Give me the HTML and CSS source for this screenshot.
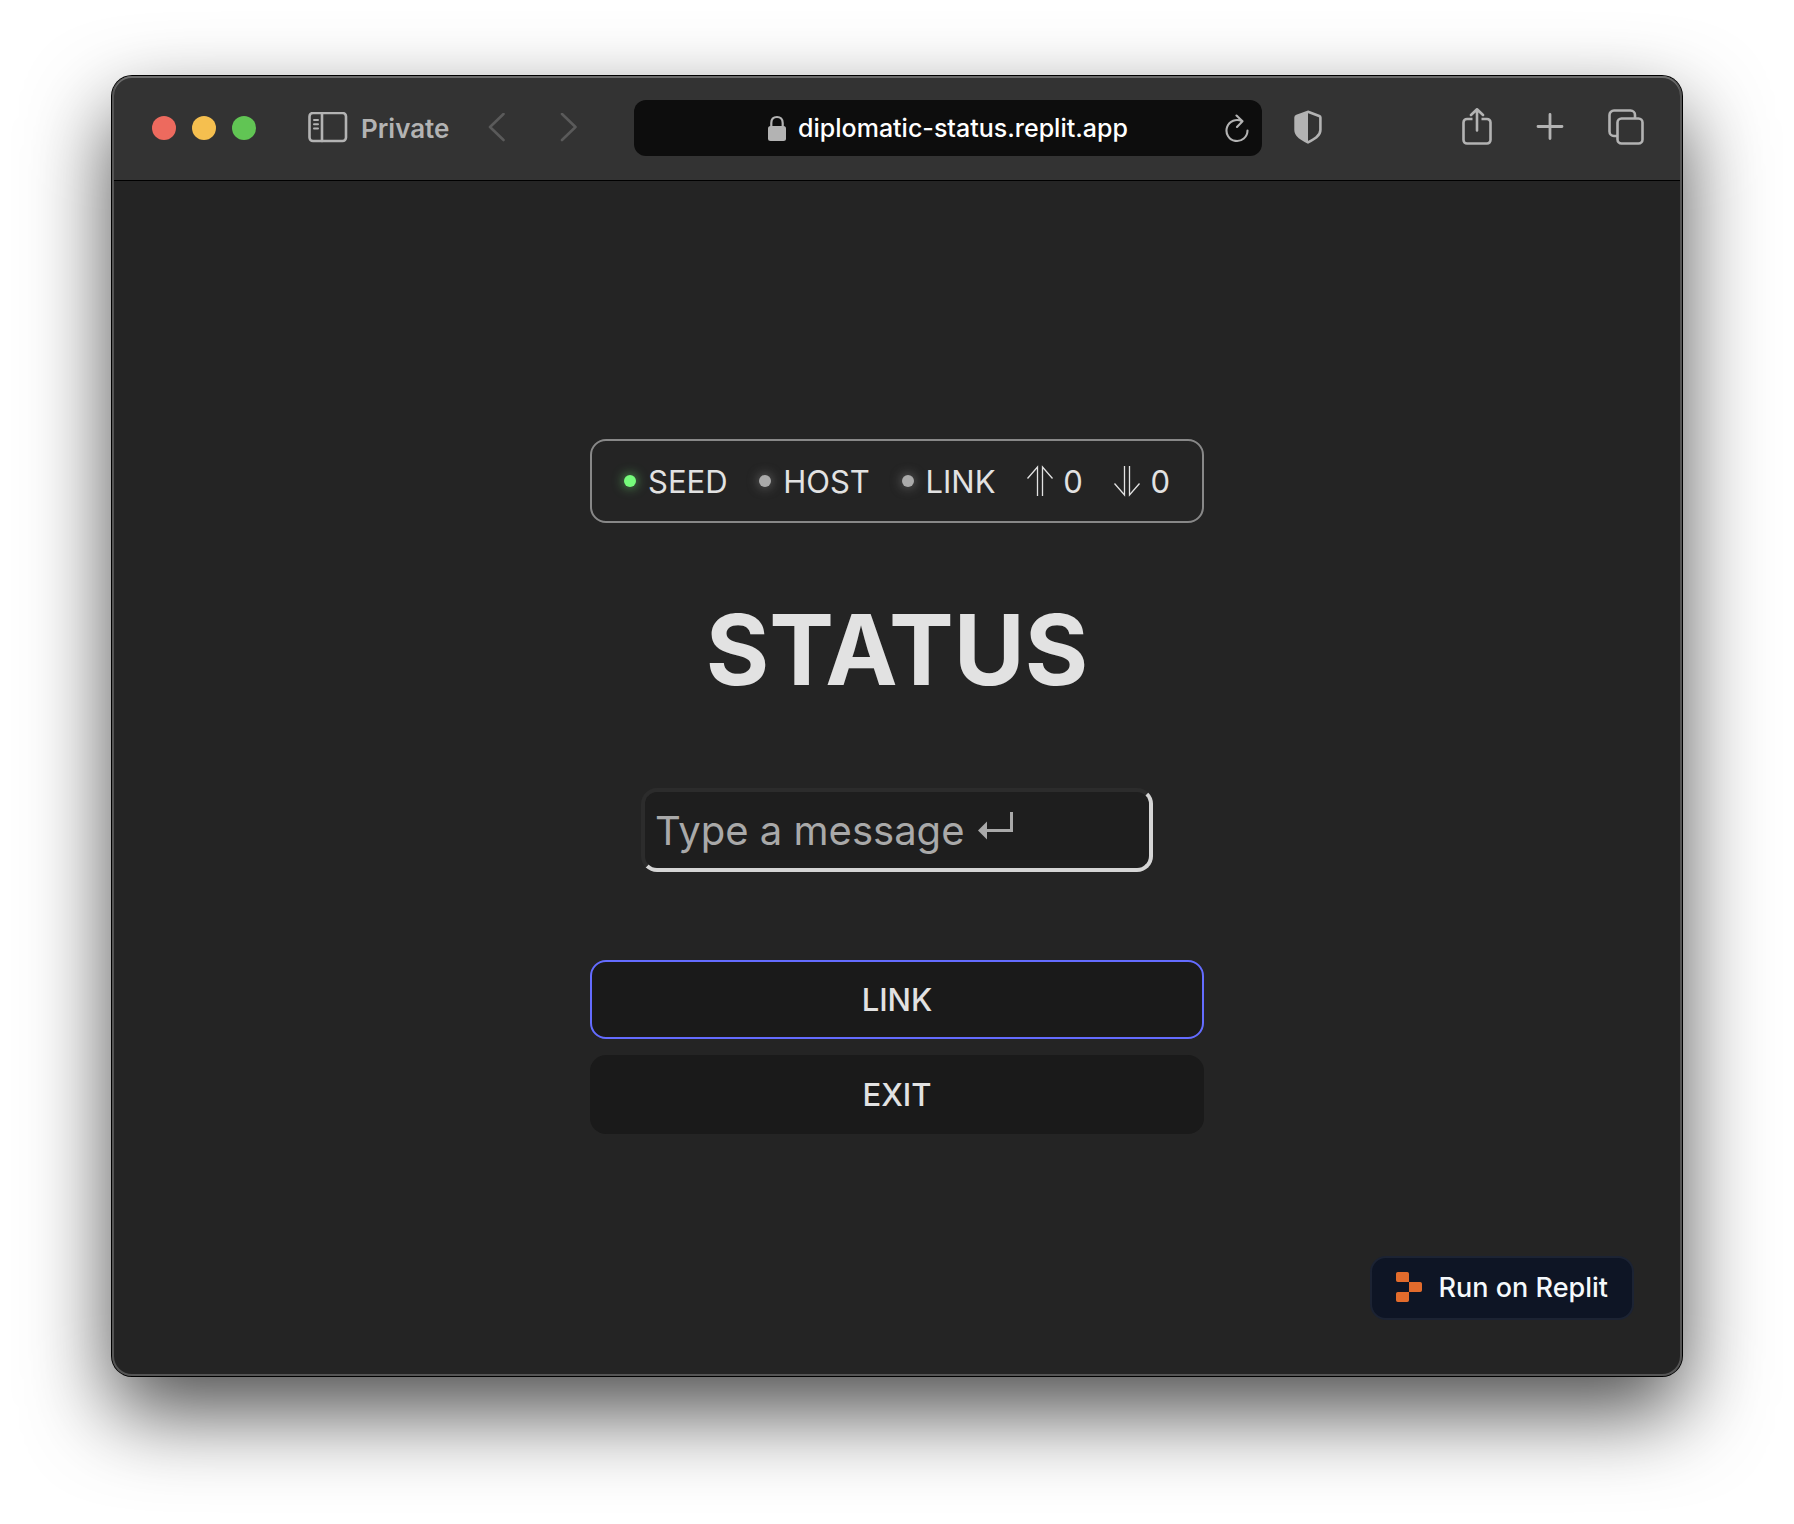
FILE: index.html
```html
<!DOCTYPE html>
<html lang="en">
<head>
<meta charset="utf-8">
<meta name="viewport" content="width=device-width, initial-scale=1">
<title>Status</title>
<link rel="stylesheet" href="styles.css">
</head>
<body>
<div class="window">
  <header class="toolbar">
    <div class="side side-left">
      <div class="lights">
        <button class="light red" aria-label="Close"></button>
        <button class="light yellow" aria-label="Minimize"></button>
        <button class="light green" aria-label="Zoom"></button>
      </div>
      <button class="private">
        <svg width="40" height="32" viewBox="0 0 40 32" fill="none" stroke="currentColor" stroke-width="2.6" stroke-linecap="round"><rect x="1.5" y="1" width="36.500" height="28" rx="3.500"/><path d="M14 1v28"/><path stroke-width="2" d="M6 8h4M6 12.300h4M6 16.600h4"/></svg>
        <span>Private</span>
      </button>
      <nav class="history">
        <button aria-label="Back"><svg width="18" height="30" viewBox="0 0 18 30" fill="none" stroke="currentColor" stroke-width="2.600" stroke-linecap="round" stroke-linejoin="round"><path d="M16.500 1 3 14l13.500 13"/></svg></button>
        <button aria-label="Forward"><svg width="18" height="30" viewBox="0 0 18 30" fill="none" stroke="currentColor" stroke-width="2.600" stroke-linecap="round" stroke-linejoin="round"><path d="M2 1l13.500 13L2 27"/></svg></button>
      </nav>
    </div>
    <div class="address">
      <svg class="lock" width="18" height="26" viewBox="0 0 18 26"><rect y="11" width="18" height="15" rx="2.500" fill="currentColor"/><path d="M3.300 12V8C3.300 4 5.500 2 9 2s5.700 2 5.700 6v4" fill="none" stroke="currentColor" stroke-width="2.200"/></svg>
      <span class="url">diplomatic-status.replit.app</span>
      <button class="reload" aria-label="Reload"><svg width="24" height="30" viewBox="0 0 24 30" fill="none" stroke="currentColor" stroke-width="2.100" stroke-linecap="round" stroke-linejoin="round"><path d="M22.500 17.500A10.500 10.500 0 1 1 17 8.300M11.500 2.500l6 5.700-5.500 5.800"/></svg></button>
    </div>
    <div class="side side-right">
      <button aria-label="Privacy report"><svg width="28" height="34" viewBox="0 0 28 34"><path d="M14 1.800 25.200 6c.8.300 1.200.8 1.200 1.600V20c0 6-6.400 9.300-12.400 12.300C8 29.300 1.600 26 1.600 20V7.600c0-.8.400-1.300 1.200-1.600z" fill="none" stroke="currentColor" stroke-width="2.600"/><path d="M14 1.500V32C8 29 1.500 26 1.500 20V6.500z" fill="currentColor"/></svg></button>
      <div class="actions">
        <button aria-label="Share"><svg width="30" height="38" viewBox="0 0 30 38" fill="none" stroke="currentColor" stroke-width="2.600" stroke-linecap="round" stroke-linejoin="round"><path stroke-linecap="butt" d="M10.500 11H5a3.500 3.500 0 0 0-3.500 3.500V32A3.500 3.500 0 0 0 5 35.500h20a3.500 3.500 0 0 0 3.500-3.500V14.500A3.500 3.500 0 0 0 25 11h-5.500"/><path d="M15 22.500V1.300M9 7l6-5.700L21 7"/></svg></button>
        <button aria-label="New tab"><svg width="28" height="28" viewBox="0 0 28 28" stroke="currentColor" stroke-width="2.800" stroke-linecap="round"><path d="M14 1.500v24M2 13.500h24"/></svg></button>
        <button aria-label="Tab overview"><svg width="36" height="36" viewBox="0 0 36 36" fill="none" stroke="currentColor" stroke-width="2.600"><rect x="9.500" y="9.500" width="25" height="25" rx="4"/><path d="M9.500 27H6a4.500 4.500 0 0 1-4.500-4.500V6A4.500 4.500 0 0 1 6 1.500h16.500A4.500 4.500 0 0 1 27 6v3.500"/></svg></button>
      </div>
    </div>
  </header>
  <main class="page">
    <div class="panel">
      <ul class="indicators">
        <li><span class="dot on"></span>SEED</li>
        <li><span class="dot"></span>HOST</li>
        <li><span class="dot"></span>LINK</li>
        <li class="count"><svg width="26" height="32" viewBox="0 0 26 32" fill="none" stroke="currentColor" stroke-width="1.300"><path d="M.5 13.500 10.500 2v29M25.500 13.500 15.500 2v29"/></svg>0</li>
        <li class="count"><svg width="26" height="32" viewBox="0 0 26 32" fill="none" stroke="currentColor" stroke-width="1.300"><path d="M.5 18.500 10.500 30V1M25.500 18.500 15.500 30V1"/></svg>0</li>
      </ul>
      <h1>STATUS</h1>
      <div class="message">
        <input type="text" placeholder="Type a message" aria-label="Type a message">
        <svg class="enter" width="36" height="28" viewBox="0 0 36 28"><path d="M0 18.500 9 9.500v18z" fill="currentColor"/><path d="M8 18.500h25.500V0" fill="none" stroke="currentColor" stroke-width="3"/></svg>
      </div>
      <div class="buttons">
        <button class="primary">LINK</button>
        <button>EXIT</button>
      </div>
    </div>
    <a class="badge" href="#">
      <svg width="26" height="30" viewBox="0 0 26 30" fill="currentColor"><path d="M1.800 0h9.400Q13 0 13 1.800V10H1.800Q0 10 0 8.200V1.800Q0 0 1.800 0zM13 10h11.200Q26 10 26 11.800v6.400q0 1.800-1.800 1.800H13zM1.800 20H13v8.200q0 1.800-1.800 1.800H1.800Q0 30 0 28.200v-6.400Q0 20 1.800 20z"/></svg>
      <span>Run on Replit</span>
    </a>
  </main>
</div>
</body>
</html>
```
FILE: styles.css
```css
* { box-sizing: border-box; }

body {
  margin: 0;
  padding: 76px 112px 148px;
  background: #fff;
  font-family: Inter, "Liberation Sans", sans-serif;
  color: #e2e2e2;
}

button {
  margin: 0;
  padding: 0;
  border: 0;
  background: none;
  color: inherit;
  font: inherit;
}

svg { display: block; flex: none; }

.window {
  display: flex;
  flex-direction: column;
  min-height: calc(100vh - 224px);
  border-radius: 20px;
  background: #242424;
  box-shadow:
    inset 0 0 0 2px #555,
    0 0 0 1px #000,
    0 36px 84px rgba(0, 0, 0, 0.7);
}

.toolbar {
  display: grid;
  grid-template-columns: minmax(0, 1fr) 628px minmax(0, 418px);
  align-items: center;
  height: 105px;
  margin: 0 2px;
  border-bottom: 1px solid #000;
  border-radius: 18px 18px 0 0;
  background: #333;
  box-shadow: inset 0 2px #6c6c6c;
  color: #b3b3b3;
}

.side { display: flex; align-items: center; }
.side-left { padding-left: 38px; }
.side-right { justify-content: space-between; padding: 0 36px 2px 32px; }

.lights { display: flex; gap: 16px; }
.light { width: 24px; height: 24px; border-radius: 50%; }
.red { background: #ed6a5e; }
.yellow { background: #f5bf4f; }
.green { background: #61c554; }

.private {
  display: flex;
  align-items: center;
  gap: 13px;
  margin-left: 52px;
  font-size: 26px;
  font-weight: 600;
}

.history { display: flex; gap: 55px; margin-left: 38px; color: #5a5a5a; }

.address {
  position: relative;
  display: flex;
  align-items: center;
  justify-content: center;
  gap: 12px;
  height: 56px;
  border-radius: 12px;
  background: #0d0d0d;
}

.url { color: #fff; font-size: 25px; font-weight: 500; }
.reload { position: absolute; right: 13px; }
.actions { display: flex; align-items: center; gap: 44px; }

.page {
  position: relative;
  display: flex;
  flex: 1;
  align-items: center;
  justify-content: center;
  padding: 16px 24px 0;
}

.panel { display: flex; flex-direction: column; align-items: center; width: 614px; }

.indicators {
  display: flex;
  align-items: center;
  justify-content: space-between;
  width: 100%;
  height: 84px;
  margin: 0;
  padding: 0 32px;
  border: 2px solid #888;
  border-radius: 16px;
  font-size: 31px;
  list-style: none;
}

.indicators li { display: flex; align-items: center; gap: 12px; }
.indicators .count { gap: 10px; }

.dot {
  width: 12px;
  height: 12px;
  border-radius: 50%;
  background: #aaa;
  box-shadow: 0 0 12px rgba(170, 170, 170, 0.6);
}

.dot.on { background: #76fb7b; box-shadow: 0 0 12px rgba(118, 251, 123, 0.7); }

h1 { margin: 71px 0 82px; font-size: 97px; font-weight: 700; line-height: 112px; }

.message { position: relative; width: 512px; }

.message input {
  display: block;
  width: 100%;
  height: 84px;
  padding: 0 10px;
  border: 4px solid;
  border-color: #2c2c2c #d5d5d5 #d5d5d5 #2c2c2c;
  border-radius: 16px;
  background: #1e1e1e;
  color: #e2e2e2;
  font: inherit;
  font-size: 40px;
}

.message input::placeholder { color: #a9a9a9; opacity: 1; }

.enter { position: absolute; top: 24px; left: 337px; color: #a9a9a9; }

.buttons { display: flex; flex-direction: column; gap: 16px; width: 100%; margin-top: 88px; }

.buttons button {
  height: 79px;
  border: 2px solid transparent;
  border-radius: 16px;
  background: #1a1a1a;
  font-size: 31px;
  font-weight: 500;
}

.buttons .primary { border-color: #646cff; }

.badge {
  position: absolute;
  right: 48px;
  bottom: 56px;
  display: flex;
  align-items: center;
  gap: 17px;
  height: 64px;
  padding: 0 24px 2px;
  border: 2px solid #1c2333;
  border-radius: 16px;
  background: #0e1525;
  color: #e26b2c;
  text-decoration: none;
}

.badge span { color: #f5f9fc; font-size: 27px; font-weight: 500; }
```
